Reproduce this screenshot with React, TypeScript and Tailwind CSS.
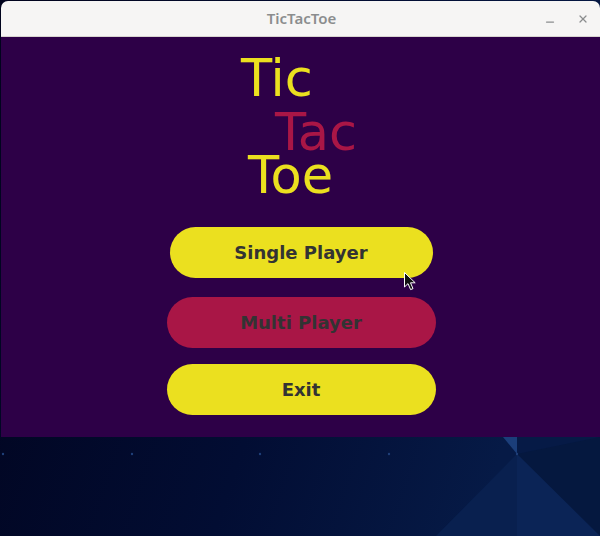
import { Minus, X } from "lucide-react";

const YELLOW = "bg-[#ebe01f]";

function Wallpaper() {
  // desktop background behind the window
  const dots = [3, 132, 260, 389, 517];
  return (
    <svg className="absolute inset-0" width="600" height="536" viewBox="0 0 600 536">
      <defs>
        <linearGradient id="wp" x1="0" y1="0" x2="1" y2="0.3">
          <stop offset="0" stopColor="#01031c" />
          <stop offset="0.6" stopColor="#020d33" />
          <stop offset="1" stopColor="#061a46" />
        </linearGradient>
      </defs>
      <rect width="600" height="536" fill="url(#wp)" />
      <polygon points="517,454 600,437 600,536" fill="#05183f" />
      <polygon points="517,454 436,536 517,536" fill="#09204f" />
      <polygon points="517,454 517,536 600,536" fill="#0b2456" />
      <polygon points="503,437 517,437 517,454" fill="#1b3e7a" />
      {dots.map((x) => (
        <circle key={x} cx={x} cy={454} r={1.2} fill="#1f3f78" />
      ))}
    </svg>
  );
}

function MenuButton({ label, width, color, className = "" }: { label: string; width: string; color: string; className?: string }) {
  return (
    <button className={`${width} ${color} ${className} h-[51px] rounded-full flex items-center justify-center text-[18px] font-bold text-[#333333]`}>
      {label}
    </button>
  );
}

export default function App() {
  return (
    <div className="relative w-[600px] h-[536px] overflow-hidden bg-[#020722]" style={{ fontFamily: '"DejaVu Sans", sans-serif' }}>
      <Wallpaper />

      <div className="relative ml-[1px] mt-[1px] w-[599px]">
        {/* header bar */}
        <div className="h-[36px] bg-[#f6f5f4] border-b border-[#d8d4d0] rounded-t-[7px] grid grid-cols-[1fr_auto_1fr] items-center">
          <div />
          <span className="pl-[2px] text-[15px] font-semibold text-[#8b8d8e]" style={{ fontFamily: '"Noto Sans", sans-serif' }}>
            TicTacToe
          </span>
          <div className="flex items-center justify-end gap-[21px] pr-[11px] text-[#8b8d8e]">
            <Minus size={12} strokeWidth={2.5} className="mt-[7px]" />
            <X size={12} strokeWidth={2.5} />
          </div>
        </div>

        {/* app content */}
        <div className="h-[400px] bg-[#2d0047] flex flex-col items-center pt-[18px] pl-[1px]">
          <div className="w-[120px] text-[51px] leading-[48px]">
            <div className="text-[#ebe01f]">Tic</div>
            <div className="pl-[34px] mt-[6px] text-[#a91646]">Tac</div>
            <div className="pl-[7px] mt-[-5px] text-[#ebe01f]">Toe</div>
          </div>

          <MenuButton label="Single Player" width="w-[263px]" color={YELLOW} className="mt-[27px]" />
          <MenuButton label="Multi Player" width="w-[269px]" color="bg-[#a91646]" className="mt-[19px]" />
          <MenuButton label="Exit" width="w-[269px]" color={YELLOW} className="mt-[16px]" />
        </div>
      </div>

      {/* mouse pointer */}
      <svg className="absolute left-[404px] top-[272px]" width="13" height="19" viewBox="0 0 13 19">
        <path d="M0.5 0.5 L0.5 15 L4 11.6 L6.6 17.6 L9 16.6 L6.5 10.8 L11.2 10.8 Z" fill="#111" stroke="#fff" strokeWidth="1" strokeLinejoin="round" />
      </svg>
    </div>
  );
}
